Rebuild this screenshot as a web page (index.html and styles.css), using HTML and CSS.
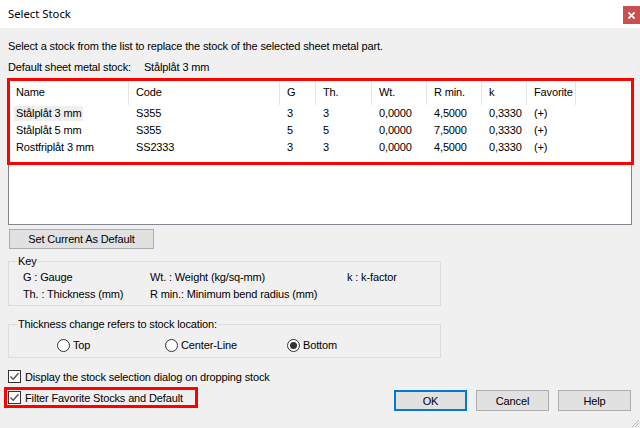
FILE: index.html
```html
<!DOCTYPE html>
<html>
<head>
<meta charset="utf-8">
<link rel="stylesheet" href="styles.css">
</head>
<body>
<div class="dialog">
  <div class="titlebar">
    <span class="title">Select Stock</span>
    <span class="close"><svg width="7" height="7" viewBox="0 0 7 7"><path d="M0.5 0.5L6.5 6.5M6.5 0.5L0.5 6.5" stroke="#fff" stroke-width="1.8"/></svg></span>
  </div>
  <div class="content">
    <div class="line intro">Select a stock from the list to replace the stock of the selected sheet metal part.</div>
    <div class="line default"><span>Default sheet metal stock:</span><span class="defval">Stålplåt 3 mm</span></div>

    <div class="listbox">
      <div class="grid head">
        <div class="hc">Name</div><div class="hc">Code</div><div class="hc">G</div><div class="hc">Th.</div><div class="hc">Wt.</div><div class="hc">R min.</div><div class="hc">k</div><div class="hc">Favorite</div>
      </div>
      <div class="grid row">
        <div class="c"><span class="sel">Stålplåt 3 mm</span></div><div class="c">S355</div><div class="c">3</div><div class="c">3</div><div class="c">0,0000</div><div class="c">4,5000</div><div class="c">0,3330</div><div class="c">(+)</div>
      </div>
      <div class="grid row">
        <div class="c">Stålplåt 5 mm</div><div class="c">S355</div><div class="c">5</div><div class="c">5</div><div class="c">0,0000</div><div class="c">7,5000</div><div class="c">0,3330</div><div class="c">(+)</div>
      </div>
      <div class="grid row">
        <div class="c">Rostfriplåt 3 mm</div><div class="c">SS2333</div><div class="c">3</div><div class="c">3</div><div class="c">0,0000</div><div class="c">4,5000</div><div class="c">0,3330</div><div class="c">(+)</div>
      </div>
      <div class="redbox list-red"></div>
    </div>

    <button class="btn setdef">Set Current As Default</button>

    <div class="group keygroup">
      <div class="glabel">Key</div>
      <div class="keygrid">
        <span>G : Gauge</span><span>Wt. : Weight (kg/sq-mm)</span><span>k : k-factor</span>
        <span>Th. : Thickness (mm)</span><span>R min.: Minimum bend radius (mm)</span><span></span>
      </div>
    </div>

    <div class="group thickgroup">
      <div class="glabel">Thickness change refers to stock location:</div>
      <div class="radios">
        <span class="radio"><span class="rc"></span>Top</span>
        <span class="radio"><span class="rc"></span>Center-Line</span>
        <span class="radio"><span class="rc on"></span>Bottom</span>
      </div>
    </div>

    <div class="bottom">
      <div class="checks">
        <div class="check"><span class="cb"><svg width="11" height="11" viewBox="0 0 11 11"><path d="M1.5 5.5L4.2 8.3L9.5 2.2" fill="none" stroke="#555" stroke-width="1.4"/></svg></span>Display the stock selection dialog on dropping stock</div>
        <div class="check"><span class="cb"><svg width="11" height="11" viewBox="0 0 11 11"><path d="M1.5 5.5L4.2 8.3L9.5 2.2" fill="none" stroke="#555" stroke-width="1.4"/></svg></span>Filter Favorite Stocks and Default<div class="redbox check-red"></div></div>
      </div>
      <div class="buttons">
        <button class="btn act ok">OK</button>
        <button class="btn act">Cancel</button>
        <button class="btn act">Help</button>
      </div>
    </div>
  </div>
  <svg class="grip" width="10" height="10" viewBox="0 0 10 10"><path d="M9 2L2 9M9 5L5 9M9 8L8 9" stroke="#b8b8b8" stroke-width="1"/></svg>
</div>
</body>
</html>
```
FILE: styles.css
```css
* { box-sizing: border-box; }
html, body { margin: 0; padding: 0; }
body {
  width: 640px;
  height: 428px;
  overflow: hidden;
  background: #f0f0f0;
  font-family: "Liberation Sans", Arial, sans-serif;
  font-size: 11px;
  letter-spacing: -0.14px;
  color: #000;
}
.dialog { position: relative; width: 640px; height: 428px; }
.titlebar {
  height: 28px;
  background: #fff;
  display: flex;
  align-items: flex-start;
  padding-left: 8px;
}
.title {
  font-family: "Noto Sans", "Liberation Sans", sans-serif;
  font-size: 11.3px;
  letter-spacing: 0;
  line-height: 16px;
  margin-top: 6px;
  color: #000;
}
.close {
  margin-left: auto;
  margin-top: 6px;
  width: 17px;
  height: 18px;
  background: #c75050;
  display: flex;
  align-items: center;
  justify-content: center;
}
.content { padding: 0 8px; }
.line { line-height: 16px; white-space: nowrap; }
.intro { margin-top: 10px; }
.default { margin-top: 5px; }
.defval { margin-left: 13px; }

.listbox {
  position: relative;
  margin-top: 5px;
  height: 145px;
  width: 624px;
  background: #fff;
  border: 1px solid #828790;
}
.grid {
  display: grid;
  grid-template-columns: 120px 151px 36px 56px 55px 55px 45px 49px;
}
.head { height: 24px; }
.hc {
  border-right: 1px solid #e5e5e5;
  padding-left: 7px;
  line-height: 23px;
  white-space: nowrap;
}
.row { height: 17px; }
.c { padding-left: 7px; line-height: 17px; white-space: nowrap; }
.sel { background: #efefef; padding: 1px 2px 2px; margin-left: -2px; }

.redbox { position: absolute; border: 3px solid #ff0000; pointer-events: none; }
.list-red { left: -2px; top: -3px; width: 627px; height: 87px; }

.btn {
  font-family: "Liberation Sans", Arial, sans-serif;
  font-size: 11px;
  letter-spacing: -0.14px;
  color: #000;
  background: #e1e1e1;
  border: 1px solid #adadad;
  padding: 0;
  margin: 0;
}
.setdef {
  display: block;
  margin-top: 4px;
  margin-left: 1px;
  width: 145px;
  height: 20px;
}

.group {
  border: 1px solid #dcdcdc;
  width: 433px;
}
.glabel {
  width: fit-content;
  margin-top: -7px;
  margin-left: 8px;
  padding: 0 1px;
  line-height: 13px;
  background: #f0f0f0;
}
.keygroup { margin-top: 12px; padding-bottom: 2px; }
.keygrid {
  display: grid;
  grid-template-columns: 127px 197px auto;
  padding-left: 14px;
  padding-top: 1px;
  line-height: 17px;
  white-space: nowrap;
}
.thickgroup { margin-top: 18px; padding-bottom: 3px; }
.radios {
  display: grid;
  grid-template-columns: 108px 122px auto;
  padding-left: 48px;
  margin-top: 6px;
  line-height: 17px;
}
.radio { display: flex; align-items: center; gap: 3px; }
.rc {
  width: 13px;
  height: 13px;
  border: 1px solid #333;
  border-radius: 50%;
  background: #fff;
  display: flex;
  align-items: center;
  justify-content: center;
}
.rc.on::after {
  content: "";
  width: 7px;
  height: 7px;
  border-radius: 50%;
  background: #333;
}

.bottom {
  display: flex;
  justify-content: space-between;
  margin-top: 8px;
}
.check {
  position: relative;
  display: flex;
  align-items: center;
  gap: 4px;
  height: 21px;
  white-space: nowrap;
}
.cb {
  width: 13px;
  height: 13px;
  border: 1px solid #333;
  background: #fff;
  display: flex;
  align-items: center;
  justify-content: center;
}
.check-red { left: -4px; top: 0px; width: 194px; height: 21px; }
.buttons {
  display: flex;
  gap: 9px;
  align-self: flex-end;
  margin-bottom: -3px;
  margin-right: 1px;
}
.act { width: 73px; height: 21px; }
.ok { border: 2px solid #0078d7; }
.grip { position: absolute; right: 0; bottom: 0; }
```
